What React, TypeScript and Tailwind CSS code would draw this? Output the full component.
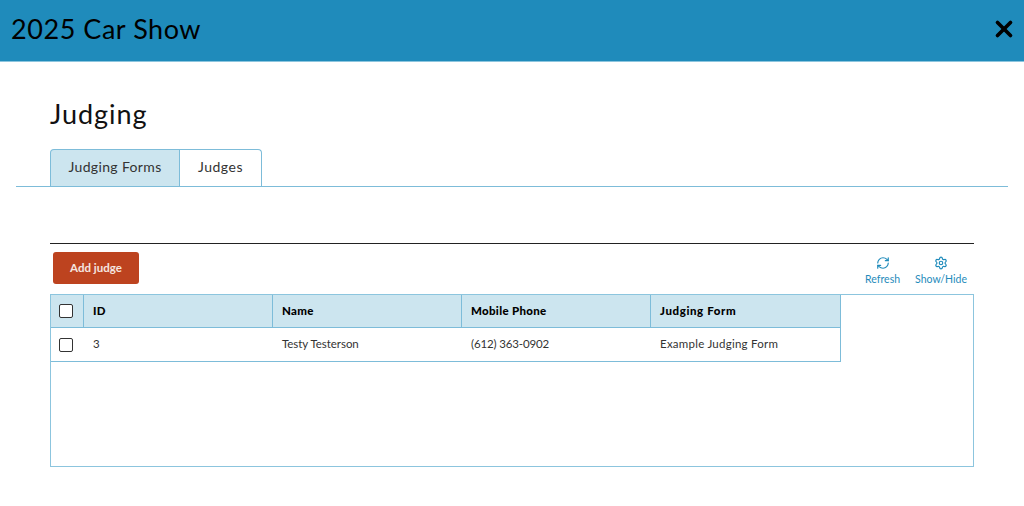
import { RefreshCw, Settings, X } from "lucide-react";

const HEAD = "flex items-center border-r border-[#7dbcd9] pl-[9px] pb-[1px] text-[11.5px] font-black tracking-[0.3px] text-black";
const CELL = "flex items-center pb-[2px] pl-[9px] text-[11.5px] text-[#333333]";

function Box() {
  return <div className="h-[14px] w-[14px] rounded-[2px] border-[1.5px] border-[#333333] bg-white" />;
}

function Tool({ icon, label }: { icon: React.ReactNode; label: string }) {
  return (
    <div className="flex flex-col items-center gap-[3px] text-[#1f8bbb]">
      {icon}
      <span className="text-[10.5px] leading-[12px]">{label}</span>
    </div>
  );
}

export default function App() {
  return (
    <div className="h-[506px] w-[1024px] overflow-hidden bg-white font-['Lato','Noto_Sans',sans-serif] text-black">
      <header className="flex h-[62px] items-center justify-between border-b border-[#8cc5de] bg-[#1f8bbb] pb-[4px] pl-[11px] pr-[7px]">
        <h1 className="text-[27px] leading-none tracking-[0.55px]">2025 Car Show</h1>
        <X size={26} strokeWidth={3.4} />
      </header>

      <div className="px-4">
        <h2 className="ml-[34px] mt-[36px] text-[27px] leading-[32px] tracking-[0.95px] text-[#111111]">Judging</h2>
        <div className="mt-[19px] flex h-[38px] w-[992px] border-b border-[#7dbcd9] pb-[3px] pl-[34px]">
          <div className="-mb-[3px] flex w-[130px] items-center justify-center rounded-tl-[4px] border border-b-0 border-[#7dbcd9] bg-[#cce5ef] pb-[3px] text-[14px] tracking-[0.35px] text-[#333333]">
            Judging Forms
          </div>
          <div className="-mb-[3px] flex w-[82px] items-center justify-center rounded-tr-[4px] border border-b-0 border-l-0 border-[#7dbcd9] pb-[3px] text-[14px] tracking-[0.5px] text-[#333333]">
            Judges
          </div>
        </div>

        <div className="ml-[34px] mt-[56px] w-[924px] border-t border-[#222222] pt-[8px]">
          <div className="flex h-[42px] items-start justify-between">
            <button className="ml-[3px] h-[32px] w-[86px] rounded-[3px] bg-[#bd431f] text-[11.5px] font-bold text-[#f5e6e0]">
              Add judge
            </button>
            <div className="mr-[7px] mt-[4px] flex gap-[15px]">
              <Tool icon={<RefreshCw size={14} strokeWidth={2} />} label="Refresh" />
              <Tool icon={<Settings size={14} strokeWidth={2} />} label="Show/Hide" />
            </div>
          </div>

          <div className="h-[173px] border border-[#8cc5de]">
            <div className="w-[790px] border-b border-r border-[#7dbcd9]">
              <div className="grid h-[33px] grid-cols-[33px_189px_189px_189px_189px] border-b border-[#7dbcd9] bg-[#cce5ef]">
                <div className="flex items-center justify-center border-r border-[#7dbcd9] pr-[3px]"><Box /></div>
                <div className={HEAD}>ID</div>
                <div className={HEAD}>Name</div>
                <div className={HEAD}>Mobile Phone</div>
                <div className="flex items-center pb-[1px] pl-[9px] text-[11.5px] font-black tracking-[0.6px] text-black">Judging Form</div>
              </div>
              <div className="grid h-[33px] grid-cols-[33px_189px_189px_189px_189px]">
                <div className="flex items-center justify-center pr-[3px]"><Box /></div>
                <div className={CELL}>3</div>
                <div className={`${CELL} tracking-[-0.05px]`}>Testy Testerson</div>
                <div className={`${CELL} tracking-[-0.15px]`}>(612) 363-0902</div>
                <div className={`${CELL} tracking-[0.25px]`}>Example Judging Form</div>
              </div>
            </div>
          </div>
        </div>
      </div>
    </div>
  );
}
